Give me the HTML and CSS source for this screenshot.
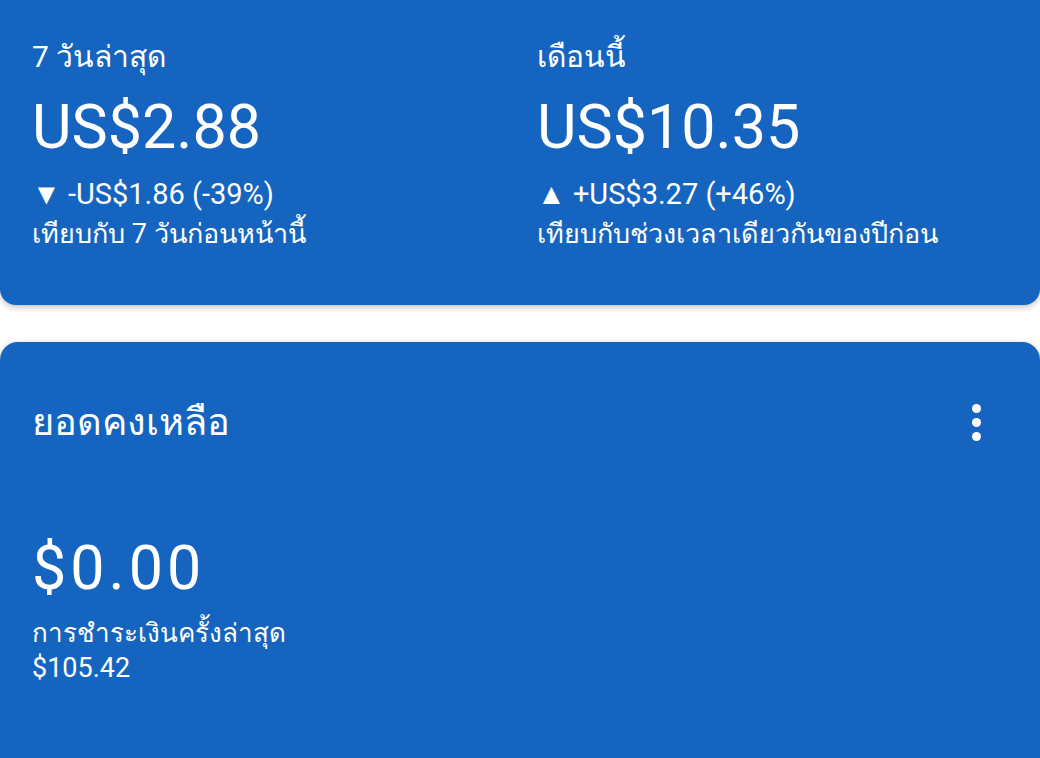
FILE: index.html
```html
<!DOCTYPE html>
<html lang="th">
<head>
  <meta charset="UTF-8">
  <title>ยอดคงเหลือ</title>
  <link rel="stylesheet" href="styles.css">
</head>
<body>
  <div class="card card-top">
    <div class="stat">
      <div class="stat-label">7 วันล่าสุด</div>
      <div class="stat-value">US$2.88</div>
      <div class="stat-change">▼ -US$1.86 (-39%)</div>
      <div class="stat-compare">เทียบกับ 7 วันก่อนหน้านี้</div>
    </div>
    <div class="stat">
      <div class="stat-label">เดือนนี้</div>
      <div class="stat-value">US$10.35</div>
      <div class="stat-change">▲ +US$3.27 (+46%)</div>
      <div class="stat-compare">เทียบกับช่วงเวลาเดียวกันของปีก่อน</div>
    </div>
  </div>

  <div class="card card-balance">
    <div class="balance-header">
      <div class="balance-title">ยอดคงเหลือ</div>
      <div class="menu">
        <span class="dot"></span>
        <span class="dot"></span>
        <span class="dot"></span>
      </div>
    </div>
    <div class="balance-value">$0.00</div>
    <div class="balance-note">การชำระเงินครั้งล่าสุด</div>
    <div class="balance-note amount">$105.42</div>
  </div>
</body>
</html>
```

FILE: styles.css
```css
body {
  margin: 0;
  background: #ffffff;
  font-family: Roboto, "Noto Sans", sans-serif;
  color: #ffffff;
  height: 758px;
  overflow: hidden;
}

.card {
  background: #1565c0;
  box-shadow: 0 2px 6px rgba(0, 0, 0, 0.25);
}

.card-top {
  display: flex;
  height: 305px;
  border-radius: 0 0 16px 16px;
  box-sizing: border-box;
  padding: 37px 32px 0;
}

.stat {
  flex: 1;
}

.stat + .stat {
  padding-left: 34px;
}

.stat-label {
  font-size: 30px;
  line-height: 40px;
}

.stat-value {
  font-size: 61px;
  line-height: 70px;
  margin-top: 15px;
}

.stat-change {
  font-size: 29px;
  line-height: 36px;
  margin-top: 14px;
}

.stat-compare {
  font-size: 27px;
  line-height: 36px;
  margin-top: 4px;
}

.card-balance {
  margin-top: 37px;
  height: 416px;
  border-radius: 18px 18px 0 0;
  padding: 0 32px;
}

.balance-header {
  display: flex;
  justify-content: space-between;
  align-items: center;
  padding-top: 60px;
  height: 40px;
}

.balance-title {
  font-size: 38px;
  line-height: 40px;
}

.menu {
  display: flex;
  flex-direction: column;
  gap: 5px;
  margin-right: 27px;
}

.dot {
  width: 9px;
  height: 9px;
  border-radius: 50%;
  background: #ffffff;
}

.balance-value {
  font-size: 61px;
  line-height: 70px;
  letter-spacing: 4px;
  margin-top: 91px;
}

.balance-note {
  font-size: 26px;
  line-height: 35px;
}

.balance-value + .balance-note {
  margin-top: 13px;
}

.amount {
  font-size: 27px;
}
```
